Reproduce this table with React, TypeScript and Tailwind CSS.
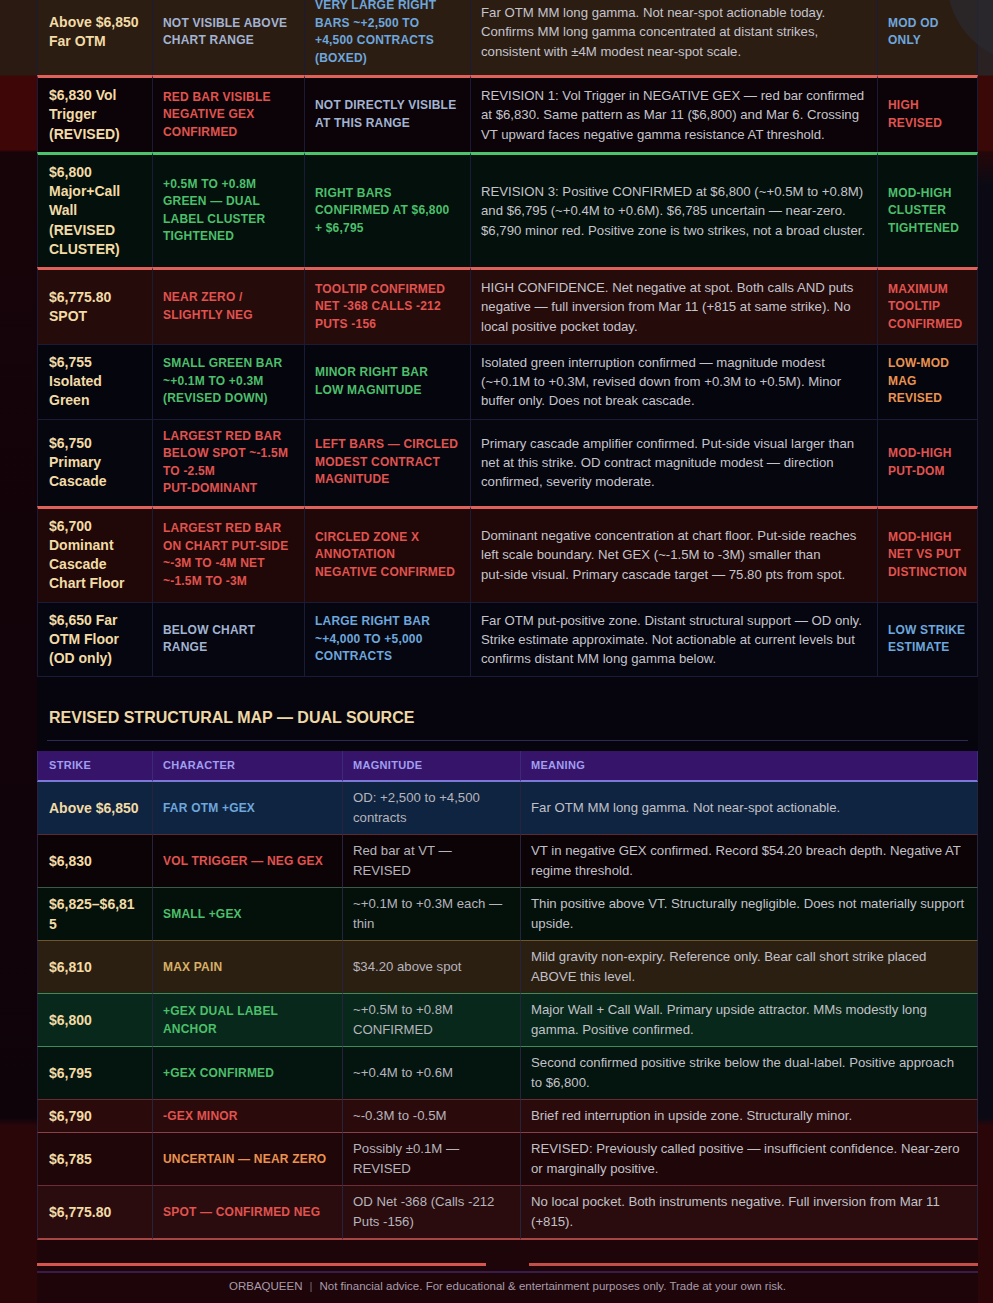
type Tone = "blue" | "slate" | "red" | "green" | "orange" | "gold";
type Edge = "none" | "thin" | "red" | "green";

const TONE: Record<Tone, string> = {
  blue: "text-[#6ea7dd]",
  slate: "text-[#a3b4d2]",
  red: "text-[#e0534f]",
  green: "text-[#4cbf6b]",
  orange: "text-[#ea9350]",
  gold: "text-[#d8b066]",
};

const TOP: Record<Edge, string> = {
  none: "",
  thin: "border-t border-t-[#1c1b37]",
  red: "border-t-[3px] border-t-[#e0605a]",
  green: "border-t-[3px] border-t-[#4cc46c]",
};

type Reading = {
  strike: string;
  signal: [string, Tone];
  od: [string, Tone];
  read: string;
  conf: [string, Tone];
  bg: string;
  top: Edge;
};

const readings: Reading[] = [
  {
    strike: "Above $6,850 Far OTM",
    signal: ["NOT VISIBLE ABOVE CHART RANGE", "slate"],
    od: ["VERY LARGE RIGHT\nBARS ~+2,500 TO\n+4,500 CONTRACTS\n(BOXED)", "blue"],
    read: "Far OTM MM long gamma. Not near-spot actionable today. Confirms MM long gamma concentrated at distant strikes, consistent with ±4M modest near-spot scale.",
    conf: ["MOD OD ONLY", "blue"],
    bg: "bg-[#2c1d13]",
    top: "none",
  },
  {
    strike: "$6,830 Vol Trigger (REVISED)",
    signal: ["RED BAR VISIBLE NEGATIVE GEX CONFIRMED", "red"],
    od: ["NOT DIRECTLY VISIBLE\nAT THIS RANGE", "slate"],
    read: "REVISION 1: Vol Trigger in NEGATIVE GEX — red bar confirmed at $6,830. Same pattern as Mar 11 ($6,800) and Mar 6. Crossing VT upward faces negative gamma resistance AT threshold.",
    conf: ["HIGH REVISED", "red"],
    bg: "bg-[#0b0307]",
    top: "red",
  },
  {
    strike: "$6,800 Major+Call Wall (REVISED CLUSTER)",
    signal: ["+0.5M TO +0.8M GREEN — DUAL LABEL CLUSTER TIGHTENED", "green"],
    od: ["RIGHT BARS\nCONFIRMED AT $6,800\n+ $6,795", "green"],
    read: "REVISION 3: Positive CONFIRMED at $6,800 (~+0.5M to +0.8M) and $6,795 (~+0.4M to +0.6M). $6,785 uncertain — near-zero. $6,790 minor red. Positive zone is two strikes, not a broad cluster.",
    conf: ["MOD-HIGH CLUSTER TIGHTENED", "green"],
    bg: "bg-[#03100b]",
    top: "green",
  },
  {
    strike: "$6,775.80 SPOT",
    signal: ["NEAR ZERO / SLIGHTLY NEG", "red"],
    od: ["TOOLTIP CONFIRMED\nNET -368 CALLS -212\nPUTS -156", "red"],
    read: "HIGH CONFIDENCE. Net negative at spot. Both calls AND puts negative — full inversion from Mar 11 (+815 at same strike). No local positive pocket today.",
    conf: ["MAXIMUM TOOLTIP CONFIRMED", "red"],
    bg: "bg-[#260b0b]",
    top: "red",
  },
  {
    strike: "$6,755 Isolated Green",
    signal: ["SMALL GREEN BAR ~+0.1M TO +0.3M (REVISED DOWN)", "green"],
    od: ["MINOR RIGHT BAR\nLOW MAGNITUDE", "green"],
    read: "Isolated green interruption confirmed — magnitude modest (~+0.1M to +0.3M, revised down from +0.3M to +0.5M). Minor buffer only. Does not break cascade.",
    conf: ["LOW-MOD MAG REVISED", "orange"],
    bg: "bg-[#05050e]",
    top: "thin",
  },
  {
    strike: "$6,750 Primary Cascade",
    signal: ["LARGEST RED BAR BELOW SPOT ~-1.5M TO -2.5M\nPUT-DOMINANT", "red"],
    od: ["LEFT BARS — CIRCLED\nMODEST CONTRACT\nMAGNITUDE", "red"],
    read: "Primary cascade amplifier confirmed. Put-side visual larger than net at this strike. OD contract magnitude modest — direction confirmed, severity moderate.",
    conf: ["MOD-HIGH PUT-DOM", "red"],
    bg: "bg-[#06060f]",
    top: "thin",
  },
  {
    strike: "$6,700 Dominant Cascade Chart Floor",
    signal: ["LARGEST RED BAR ON CHART PUT-SIDE ~-3M TO -4M NET ~-1.5M TO -3M", "red"],
    od: ["CIRCLED ZONE X\nANNOTATION\nNEGATIVE CONFIRMED", "red"],
    read: "Dominant negative concentration at chart floor. Put-side reaches left scale boundary. Net GEX (~-1.5M to -3M) smaller than\nput-side visual. Primary cascade target — 75.80 pts from spot.",
    conf: ["MOD-HIGH NET VS PUT DISTINCTION", "red"],
    bg: "bg-[#1f0807]",
    top: "red",
  },
  {
    strike: "$6,650 Far OTM Floor (OD only)",
    signal: ["BELOW CHART RANGE", "slate"],
    od: ["LARGE RIGHT BAR\n~+4,000 TO +5,000\nCONTRACTS", "blue"],
    read: "Far OTM put-positive zone. Distant structural support — OD only. Strike estimate approximate. Not actionable at current levels but confirms distant MM long gamma below.",
    conf: ["LOW STRIKE ESTIMATE", "blue"],
    bg: "bg-[#05060f]",
    top: "thin",
  },
];

type Level = {
  strike: string;
  character: [string, Tone];
  magnitude: string;
  meaning: string;
  bg: string;
  edge: string;
};

const levels: Level[] = [
  {
    strike: "Above $6,850",
    character: ["FAR OTM +GEX", "blue"],
    magnitude: "OD: +2,500 to +4,500 contracts",
    meaning: "Far OTM MM long gamma. Not near-spot actionable.",
    bg: "bg-[#0f2440]",
    edge: "",
  },
  {
    strike: "$6,830",
    character: ["VOL TRIGGER — NEG GEX", "red"],
    magnitude: "Red bar at VT — REVISED",
    meaning: "VT in negative GEX confirmed. Record $54.20 breach depth. Negative AT regime threshold.",
    bg: "bg-[#0c0307]",
    edge: "border-t border-t-[#5c2934]",
  },
  {
    strike: "$6,825–$6,815",
    character: ["SMALL +GEX", "green"],
    magnitude: "~+0.1M to +0.3M each — thin",
    meaning: "Thin positive above VT. Structurally negligible. Does not materially support upside.",
    bg: "bg-[#04110b]",
    edge: "border-t border-t-[#385a46]",
  },
  {
    strike: "$6,810",
    character: ["MAX PAIN", "gold"],
    magnitude: "$34.20 above spot",
    meaning: "Mild gravity non-expiry. Reference only. Bear call short strike placed ABOVE this level.",
    bg: "bg-[#2b1f12]",
    edge: "border-t border-t-[#6e5530]",
  },
  {
    strike: "$6,800",
    character: ["+GEX DUAL LABEL ANCHOR", "green"],
    magnitude: "~+0.5M to +0.8M CONFIRMED",
    meaning: "Major Wall + Call Wall. Primary upside attractor. MMs modestly long gamma. Positive confirmed.",
    bg: "bg-[#07281a]",
    edge: "border-t border-t-[#3d8a5c]",
  },
  {
    strike: "$6,795",
    character: ["+GEX CONFIRMED", "green"],
    magnitude: "~+0.4M to +0.6M",
    meaning: "Second confirmed positive strike below the dual-label. Positive approach\nto $6,800.",
    bg: "bg-[#04140f]",
    edge: "border-t border-t-[#3d8a5c]",
  },
  {
    strike: "$6,790",
    character: ["-GEX MINOR", "red"],
    magnitude: "~-0.3M to -0.5M",
    meaning: "Brief red interruption in upside zone. Structurally minor.",
    bg: "bg-[#2a0a0b]",
    edge: "border-t border-t-[#6a2a32]",
  },
  {
    strike: "$6,785",
    character: ["UNCERTAIN — NEAR ZERO", "orange"],
    magnitude: "Possibly ±0.1M — REVISED",
    meaning: "REVISED: Previously called positive — insufficient confidence. Near-zero or marginally positive.",
    bg: "bg-[#1e0609]",
    edge: "border-t border-t-[#8a3e48]",
  },
  {
    strike: "$6,775.80",
    character: ["SPOT — CONFIRMED NEG", "red"],
    magnitude: "OD Net -368 (Calls -212 Puts -156)",
    meaning: "No local pocket. Both instruments negative. Full inversion from Mar 11 (+815).",
    bg: "bg-[#2a0c0e]",
    edge: "border-t border-t-[#6e2d36] border-b-2 border-b-[#a84646]",
  },
];

function ReadingsTable() {
  return (
    <table className="-mt-[11px] w-full table-fixed border-separate border-spacing-0">
      <colgroup>
        <col className="w-[115px]" />
        <col className="w-[152px]" />
        <col className="w-[166px]" />
        <col className="w-[407px]" />
        <col className="w-[101px]" />
      </colgroup>
      <tbody>
        {readings.map((r, i) => {
          const last = i === readings.length - 1 ? "border-b border-b-[#1c1b37]" : "";
          const cell = `${TOP[r.top]} ${last} border-l border-l-[#1c1b37] py-2 align-middle whitespace-pre-line`;
          const tag = "text-[12px] font-bold uppercase leading-[17.5px] tracking-[0.2px]";
          return (
            <tr key={r.strike} className={r.bg}>
              <td className={`${cell} pl-[11px] pr-[10px] text-[14px] font-bold leading-[19.25px] text-[#f2dba6]`}>
                {r.strike}
              </td>
              <td className={`${cell} ${tag} ${TONE[r.signal[1]]} pl-[10px] pr-[10px]`}>{r.signal[0]}</td>
              <td className={`${cell} ${tag} ${TONE[r.od[1]]} pl-[10px] pr-[11px]`}>{r.od[0]}</td>
              <td className={`${cell} pl-[10px] pr-[7px] text-[13.2px] leading-[19.25px] text-[#c5c4cc]`}>{r.read}</td>
              <td className={`${cell} ${tag} ${TONE[r.conf[1]]} border-r border-r-[#1c1b37] pl-[10px] pr-[8px]`}>
                {r.conf[0]}
              </td>
            </tr>
          );
        })}
      </tbody>
    </table>
  );
}

function StructuralMap() {
  const head = "border-l border-l-[#3a2a78] border-b-2 border-b-[#7c78d8] py-[7px] text-left text-[11px] font-bold uppercase leading-[15px] tracking-[0.3px] text-[#a09ef0]";
  return (
    <table className="mt-[10px] w-full table-fixed border-separate border-spacing-0">
      <colgroup>
        <col className="w-[115px]" />
        <col className="w-[190px]" />
        <col className="w-[178px]" />
        <col className="w-[458px]" />
      </colgroup>
      <thead>
        <tr className="bg-[#36146a]">
          <th className={`${head} pl-[11px]`}>Strike</th>
          <th className={`${head} pl-[10px]`}>Character</th>
          <th className={`${head} pl-[10px]`}>Magnitude</th>
          <th className={`${head} border-r border-r-[#3a2a78] pl-[10px]`}>Meaning</th>
        </tr>
      </thead>
      <tbody>
        {levels.map((l) => {
          const cell = `${l.edge} border-l border-l-[#27233f] py-[6px] align-middle`;
          return (
            <tr key={l.strike} className={l.bg}>
              <td className={`${cell} break-all pl-[11px] pr-[12px] text-[14px] font-bold leading-[20px] text-[#f2dba6]`}>
                {l.strike}
              </td>
              <td className={`${cell} ${TONE[l.character[1]]} pl-[10px] pr-[12px] text-[12px] font-bold leading-[18px] tracking-[0.2px]`}>
                {l.character[0]}
              </td>
              <td className={`${cell} pl-[10px] pr-[12px] text-[13.2px] leading-[20px] text-[#b6b4bc]`}>{l.magnitude}</td>
              <td className={`${cell} whitespace-pre-line border-r border-r-[#27233f] pl-[10px] pr-[6px] text-[13.2px] leading-[20px] text-[#c2c1c8]`}>
                {l.meaning}
              </td>
            </tr>
          );
        })}
      </tbody>
    </table>
  );
}

export default function App() {
  return (
    <div className="relative flex min-h-screen overflow-hidden font-['Liberation_Sans',Arial,sans-serif]">
      {/* backdrop strips either side of the panel */}
      <div className="w-[37px] shrink-0 bg-[linear-gradient(180deg,#2a1a11_0px,#2a1a11_75px,#3e0607_76px,#3e0607_150px,#170409_152px,#120309_560px,#0f030a_1118px,#2b0609_1126px,#2b0609_100%)]" />

      <main className="w-[941px] shrink-0 bg-[linear-gradient(180deg,#06050d_0px,#06050d_1118px,#1d0609_1135px,#1d0509_100%)]">
        <ReadingsTable />

        <h2 className="mx-[10px] mt-[31px] border-b border-b-[#2b2956] pb-[12px] pl-[2px] text-[16px] font-bold leading-[20px] text-[#eed8a6]">
          REVISED STRUCTURAL MAP — DUAL SOURCE
        </h2>

        <StructuralMap />

        <div className="mt-[23px] flex gap-[43px]">
          <div className="h-[3px] flex-1 bg-[#d6554f]" />
          <div className="h-[3px] flex-1 bg-[#c44f4a]" />
        </div>
        <div className="mt-[5px] h-[2px] bg-[#3a1c4c]" />
        <p className="pt-[6px] pb-[10px] text-center text-[11.5px] leading-[14px] text-[#a99ca9]">
          ORBAQUEEN<span className="mx-[7px] text-[#76687a]">|</span>Not financial advice. For educational &amp; entertainment purposes only. Trade at your own risk.
        </p>
      </main>

      <div className="flex-1 bg-[linear-gradient(180deg,#2a2222_0px,#2a2222_75px,#3b0808_76px,#3b0808_150px,#250709_152px,#0b0a14_185px,#0b0a14_1118px,#2b0609_1126px,#2b0609_100%)]" />

      {/* floating control peeking in at the top right corner */}
      <div className="absolute left-[947px] top-[-102px] h-[165px] w-[165px] rounded-full bg-[#2a2a30]/70" />
    </div>
  );
}
